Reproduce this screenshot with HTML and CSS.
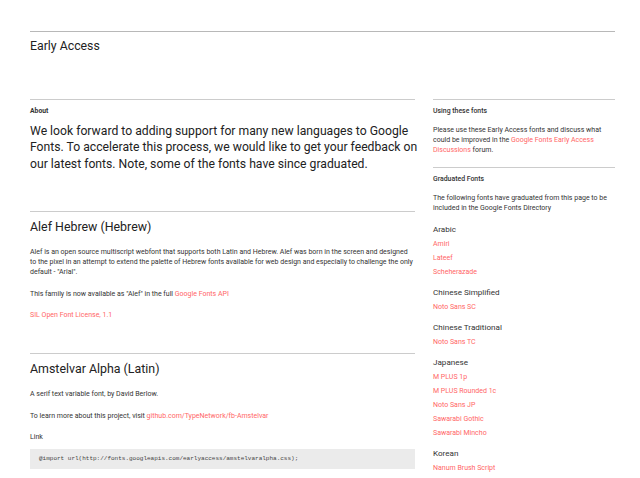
FILE: index.html
```html
<!DOCTYPE html>
<html lang="en">
<head>
<meta charset="utf-8">
<title>Early Access</title>
<link rel="stylesheet" href="styles.css">
</head>
<body>
<div class="page">
  <header class="header">
    <h1 class="title">Early Access</h1>
  </header>
  <div class="main">
    <div class="left">
      <section class="about">
        <h2 class="label">About</h2>
        <p class="lead">We look forward to adding support for many new languages to Google Fonts. To accelerate this process, we would like to get your feedback on our latest fonts. Note, some of the fonts have since graduated.</p>
      </section>
      <section class="family">
        <h3 class="family-name">Alef Hebrew (Hebrew)</h3>
        <p class="text">Alef is an open source multiscript webfont that supports both Latin and Hebrew. Alef was born in the screen and designed to the pixel in an attempt to extend the palette of Hebrew fonts available for web design and especially to challenge the only default - "Arial".</p>
        <p class="text">This family is now available as "Alef" in the full <a class="link" href="#">Google Fonts API</a></p>
        <p class="text"><a class="link" href="#">SIL Open Font License, 1.1</a></p>
      </section>
      <section class="family family-last">
        <h3 class="family-name">Amstelvar Alpha (Latin)</h3>
        <p class="text">A serif text variable font, by David Berlow.</p>
        <p class="text">To learn more about this project, visit <a class="link" href="#">github.com/TypeNetwork/fb-Amstelvar</a></p>
        <p class="text">Link</p>
        <pre class="code">@import url(http://fonts.googleapis.com/earlyaccess/amstelvaralpha.css);</pre>
      </section>
    </div>
    <aside class="right">
      <section class="side-block">
        <h2 class="side-label">Using these fonts</h2>
        <p class="side-text">Please use these Early Access fonts and discuss what could be improved in the <a class="link" href="#">Google Fonts Early Access Discussions</a> forum.</p>
      </section>
      <section class="side-block">
        <h2 class="side-label">Graduated Fonts</h2>
        <p class="side-text">The following fonts have graduated from this page to be included in the Google Fonts Directory</p>
        <div class="lang first">
          <div class="lang-name">Arabic</div>
          <a class="lang-link" href="#">Amiri</a>
          <a class="lang-link" href="#">Lateef</a>
          <a class="lang-link" href="#">Scheherazade</a>
        </div>
        <div class="lang">
          <div class="lang-name">Chinese Simplified</div>
          <a class="lang-link" href="#">Noto Sans SC</a>
        </div>
        <div class="lang">
          <div class="lang-name">Chinese Traditional</div>
          <a class="lang-link" href="#">Noto Sans TC</a>
        </div>
        <div class="lang">
          <div class="lang-name">Japanese</div>
          <a class="lang-link" href="#">M PLUS 1p</a>
          <a class="lang-link" href="#">M PLUS Rounded 1c</a>
          <a class="lang-link" href="#">Noto Sans JP</a>
          <a class="lang-link" href="#">Sawarabi Gothic</a>
          <a class="lang-link" href="#">Sawarabi Mincho</a>
        </div>
        <div class="lang">
          <div class="lang-name">Korean</div>
          <a class="lang-link" href="#">Nanum Brush Script</a>
        </div>
      </section>
    </aside>
  </div>
</div>
</body>
</html>
```
FILE: styles.css
```css
html, body {
  margin: 0;
  padding: 0;
  background: #fff;
}
body {
  font-family: Roboto, "Liberation Sans", sans-serif;
  color: #222;
  overflow: hidden;
}
.page {
  padding: 31px 25px 0 30px;
}
.header {
  border-top: 1px solid #b8b8b8;
  height: 67px;
}
.title {
  margin: 0;
  padding-top: 6px;
  font-size: 12.3px;
  line-height: 16px;
  font-weight: 400;
  color: #222;
}
.main {
  display: grid;
  grid-template-columns: 385px 1fr;
  column-gap: 18px;
  align-items: start;
}
.about {
  border-top: 1px solid #ccc;
  padding-top: 6px;
  padding-bottom: 39px;
}
.label {
  margin: 0;
  font-size: 6.8px;
  line-height: 10px;
  font-weight: 700;
  color: #333;
}
.lead {
  margin: 7px -8px 0 0;
  font-size: 12.2px;
  line-height: 16.4px;
  color: #222;
}
.family {
  border-top: 1px solid #ccc;
  padding-top: 7px;
  padding-bottom: 33px;
}
.family-last {
  padding-bottom: 0;
}
.family-name {
  margin: 0;
  font-size: 12.4px;
  line-height: 16px;
  font-weight: 400;
  color: #222;
}
.text {
  margin: 11.5px 0 0;
  font-size: 7px;
  line-height: 10px;
  color: #333;
}
.family-name + .text {
  margin-top: 12px;
}
.link {
  color: #f66;
  text-decoration: none;
}
.code {
  margin: 7px 0 0;
  background: #ebebeb;
  padding: 5px 9px;
  font-family: "Liberation Mono", "DejaVu Sans Mono", monospace;
  font-size: 6px;
  line-height: 10px;
  color: #444;
}
.side-block {
  border-top: 1px solid #ccc;
  padding-top: 6px;
}
.side-block + .side-block {
  margin-top: 12px;
}
.side-label {
  margin: 0;
  font-size: 6.9px;
  line-height: 10px;
  font-weight: 500;
  color: #333;
}
.side-text {
  margin: 9px 0 0;
  font-size: 7px;
  line-height: 10px;
  color: #333;
}
.lang {
  margin-top: 6px;
}
.lang.first {
  margin-top: 8.5px;
}
.lang-name {
  font-size: 8.1px;
  line-height: 15px;
  color: #333;
}
.lang-link {
  display: block;
  font-size: 7px;
  line-height: 14px;
  color: #f66;
  text-decoration: none;
}
```
